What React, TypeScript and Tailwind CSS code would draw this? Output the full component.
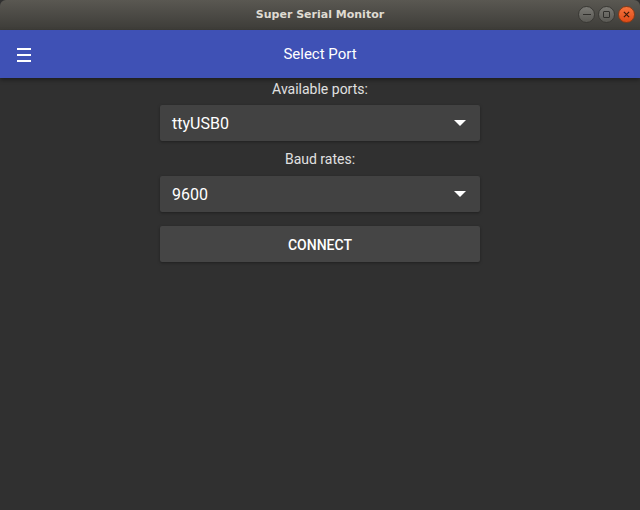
import React, { useState } from "react";

const ports = ["ttyUSB0"];
const bauds = ["9600"];

// small dropdown caret like the material select
const Caret = () => (
  <svg width="12" height="6" viewBox="0 0 12 6" className="shrink-0">
    <path d="M0 0h12L6 6z" fill="#ffffff" />
  </svg>
);

const Select = ({ value }: { value: string }) => (
  <button
    type="button"
    className="w-full h-[36px] flex items-center justify-between pl-[12px] pr-[14px] rounded-[2px] bg-[#424242] shadow-[0_1px_3px_rgba(0,0,0,0.35)] text-white text-[16px]"
  >
    <span className="pt-[2px]">{value}</span>
    <Caret />
  </button>
);

export default function App() {
  const [port] = useState(ports[0]);
  const [baud] = useState(bauds[0]);

  return (
    <div className="w-[640px] h-[510px] flex flex-col bg-[#303030] overflow-hidden font-['Roboto',sans-serif]">
      {/* ─── window title bar ─── */}
      <div className="h-[30px] shrink-0 relative flex items-center justify-center bg-gradient-to-b from-[#5a5852] to-[#3d3c38] rounded-t-[6px]">
        <span className="text-[11px] font-bold text-[#dfdbd2] font-['DejaVu_Sans',sans-serif]">
          Super Serial Monitor
        </span>
        <div className="absolute right-[5px] top-[6px] flex gap-[3px]">
          <div className="w-[17px] h-[17px] rounded-full bg-gradient-to-b from-[#7a7974] to-[#5a5954] flex items-center justify-center border border-[#3a3935]">
            <div className="w-[8px] h-[1.5px] bg-[#2f2e2b]" />
          </div>
          <div className="w-[17px] h-[17px] rounded-full bg-gradient-to-b from-[#7a7974] to-[#5a5954] flex items-center justify-center border border-[#3a3935]">
            <div className="w-[7px] h-[7px] border border-[#2f2e2b] rounded-[1px]" />
          </div>
          <div className="w-[17px] h-[17px] rounded-full bg-gradient-to-b from-[#f5733c] to-[#df4a16] flex items-center justify-center border border-[#8c3a14]">
            <svg width="7" height="7" viewBox="0 0 8 8">
              <path d="M1 1l6 6M7 1l-6 6" stroke="#3b1a0a" strokeWidth="1.4" />
            </svg>
          </div>
        </div>
      </div>

      {/* ─── app bar ─── */}
      <div className="h-[48px] shrink-0 relative z-10 flex items-center bg-[#3f51b5] shadow-[0_2px_4px_rgba(0,0,0,0.4)]">
        <div className="absolute left-[17px] top-[18px] flex flex-col gap-[4px]">
          <div className="w-[14px] h-[2px] bg-white" />
          <div className="w-[14px] h-[2px] bg-white" />
          <div className="w-[14px] h-[2px] bg-white" />
        </div>
        <p className="w-full text-center text-white text-[15px]">Select Port</p>
      </div>

      {/* ─── form ─── */}
      <div className="w-[320px] mx-auto flex flex-col items-center text-[#e0e0e0] text-[14px]">
        <p className="h-[20px] leading-[20px] pt-[1px] mb-[7px]">Available ports:</p>
        <Select value={port} />
        <p className="h-[20px] leading-[20px] pt-[1px] mt-[7px] mb-[8px]">Baud rates:</p>
        <Select value={baud} />
        <button
          type="button"
          className="mt-[14px] w-full h-[36px] pt-[2px] rounded-[2px] bg-[#454545] shadow-[0_1px_3px_rgba(0,0,0,0.35)] text-white text-[14px] font-medium"
        >
          CONNECT
        </button>
      </div>
    </div>
  );
}
